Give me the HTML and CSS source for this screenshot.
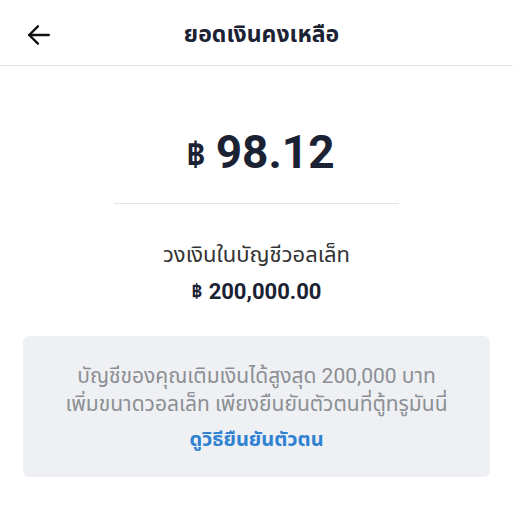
FILE: index.html
```html
<!DOCTYPE html>
<html lang="th">
<head>
    <title>ยอดเงินคงเหลือ</title>
    <link rel="stylesheet" href="styles.css">
    <meta name="viewport" content="width=device-width, initial-scale=1.0" charset="utf-8">
</head>
<body>
    <!-- Top bar -->
    <div class="top-bar">
        <div class="back-button">
            <svg width="26" height="26" viewBox="0 0 24 24" fill="none" stroke="#111" stroke-width="2.2" stroke-linecap="round" stroke-linejoin="round">
                <path d="M21 12H3"/>
                <path d="M11 4l-8 8 8 8"/>
            </svg>
        </div>
        <div class="title">ยอดเงินคงเหลือ</div>
        <div class="spacer"></div>
    </div>

    <!-- Balance -->
    <div class="balance">
        <div class="amount"><span class="currency">฿</span>98.12</div>
        <div class="divider"></div>
    </div>

    <!-- Wallet limit -->
    <div class="limit">
        <div class="limit-label">วงเงินในบัญชีวอลเล็ท</div>
        <div class="limit-value"><span class="currency-small">฿</span>200,000.00</div>
    </div>

    <!-- Info box -->
    <div class="info-box">
        <p class="info-text">บัญชีของคุณเติมเงินได้สูงสุด 200,000 บาท<br>เพิ่มขนาดวอลเล็ท เพียงยืนยันตัวตนที่ตู้ทรูมันนี่</p>
        <a class="info-link" href="#">ดูวิธียืนยันตัวตน</a>
    </div>
</body>
</html>
```

FILE: styles.css
```css
body {
    margin: 0;
    padding: 0;
    background-color: #fff;
    font-family: Roboto, "Noto Sans Thai", "Noto Sans", sans-serif;
    color: #1b2233;
}
.top-bar {
    height: 66px;
    display: flex;
    align-items: center;
    border-bottom: 1px solid #e6e6e8;
    padding: 4px 20px 0 26px;
    box-sizing: border-box;
}
.back-button {
    width: 40px;
    display: flex;
    align-items: center;
}
.spacer {
    width: 40px;
}
.title {
    flex: 1;
    text-align: center;
    font-size: 23px;
    font-weight: 700;
    color: #1b2233;
    padding-left: 4px;
}
.balance {
    display: flex;
    flex-direction: column;
    align-items: center;
    padding-top: 58px;
}
.amount {
    font-size: 46px;
    font-weight: 700;
    line-height: 56px;
    color: #1b2233;
    padding-left: 8px;
}
.currency {
    font-size: 33px;
    margin-right: 10px;
    vertical-align: 2px;
}
.divider {
    width: 285px;
    height: 1px;
    background-color: #e3e3e5;
    margin-top: 20px;
}
.limit {
    display: flex;
    flex-direction: column;
    align-items: center;
    padding-top: 37px;
}
.limit-label {
    font-size: 22px;
    color: #333;
    line-height: 28px;
}
.limit-value {
    font-size: 22px;
    font-weight: 700;
    line-height: 28px;
    margin-top: 9px;
}
.currency-small {
    font-size: 19px;
    margin-right: 6px;
    vertical-align: 1px;
}
.info-box {
    margin: 30px 23px 0 23px;
    padding: 26px 10px 24px 10px;
    background-color: #eef0f3;
    border-radius: 6px;
    text-align: center;
}
.info-text {
    margin: 0;
    font-size: 21px;
    line-height: 28px;
    color: #8c8f94;
}
.info-link {
    display: inline-block;
    margin-top: 7px;
    font-size: 20px;
    font-weight: 700;
    line-height: 28px;
    color: #2f82d2;
    text-decoration: none;
}
```
